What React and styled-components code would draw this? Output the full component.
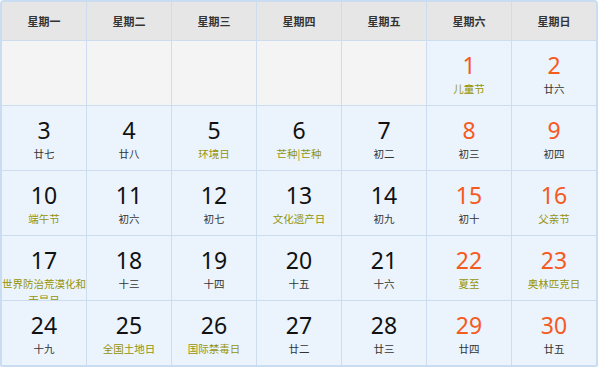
import React from 'react';
import styled, { createGlobalStyle } from 'styled-components';

const GlobalStyle = createGlobalStyle`
  html, body {
    margin: 0;
    padding: 0;
    background: #ffffff;
  }
  body {
    font-family: "Liberation Sans", "Noto Sans CJK SC", sans-serif;
  }
`;

const Frame = styled.div`
  width: 598px;
  box-sizing: border-box;
  border: 2px solid #c9dcf2;
  border-radius: 4px 4px 2px 2px;
  overflow: hidden;
`;

const Grid = styled.div`
  display: grid;
  grid-template-columns: repeat(7, 84px);
  grid-template-rows: 38px repeat(5, 64px);
  gap: 1px;
  background: #cddcee;
`;

const HeadCell = styled.div`
  display: flex;
  align-items: center;
  justify-content: center;
  background: #e6e6e6;
  color: #333333;
  font-family: "Noto Sans CJK SC", sans-serif;
  font-size: 11px;
  font-weight: bold;
`;

const DayCell = styled.div`
  background: ${(p) => (p.$empty ? '#f4f4f4' : '#ebf3fc')};
  box-sizing: border-box;
  padding-top: 9px;
  text-align: center;
  overflow: hidden;
`;

const Num = styled.div`
  font-family: "Noto Sans", "Liberation Sans", sans-serif;
  font-size: 23px;
  line-height: 31px;
  color: ${(p) => (p.$weekend ? '#f55a1e' : '#111111')};
`;

const Label = styled.div`
  font-family: "Noto Sans CJK SC", sans-serif;
  font-size: 10.5px;
  line-height: 16px;
  color: ${(p) => (p.$fest ? '#959408' : '#333333')};
`;

const weekdays = ['星期一', '星期二', '星期三', '星期四', '星期五', '星期六', '星期日'];

// [day, label, isFestival]
const days = [
  null, null, null, null, null,
  [1, '儿童节', true], [2, '廿六'],
  [3, '廿七'], [4, '廿八'], [5, '环境日', true], [6, '芒种|芒种', true], [7, '初二'], [8, '初三'], [9, '初四'],
  [10, '端午节', true], [11, '初六'], [12, '初七'], [13, '文化遗产日', true], [14, '初九'], [15, '初十'], [16, '父亲节', true],
  [17, '世界防治荒漠化和干旱日', true], [18, '十三'], [19, '十四'], [20, '十五'], [21, '十六'], [22, '夏至', true], [23, '奥林匹克日', true],
  [24, '十九'], [25, '全国土地日', true], [26, '国际禁毒日', true], [27, '廿二'], [28, '廿三'], [29, '廿四'], [30, '廿五'],
];

export default function App() {
  return (
    <>
      <GlobalStyle />
      <Frame>
        <Grid>
          {weekdays.map((w) => (
            <HeadCell key={w}>{w}</HeadCell>
          ))}
          {days.map((d, i) => {
            if (!d) return <DayCell key={'e' + i} $empty />;
            const weekend = i % 7 >= 5;
            return (
              <DayCell key={d[0]}>
                <Num $weekend={weekend}>{d[0]}</Num>
                <Label $fest={d[2]}>{d[1]}</Label>
              </DayCell>
            );
          })}
        </Grid>
      </Frame>
    </>
  );
}
